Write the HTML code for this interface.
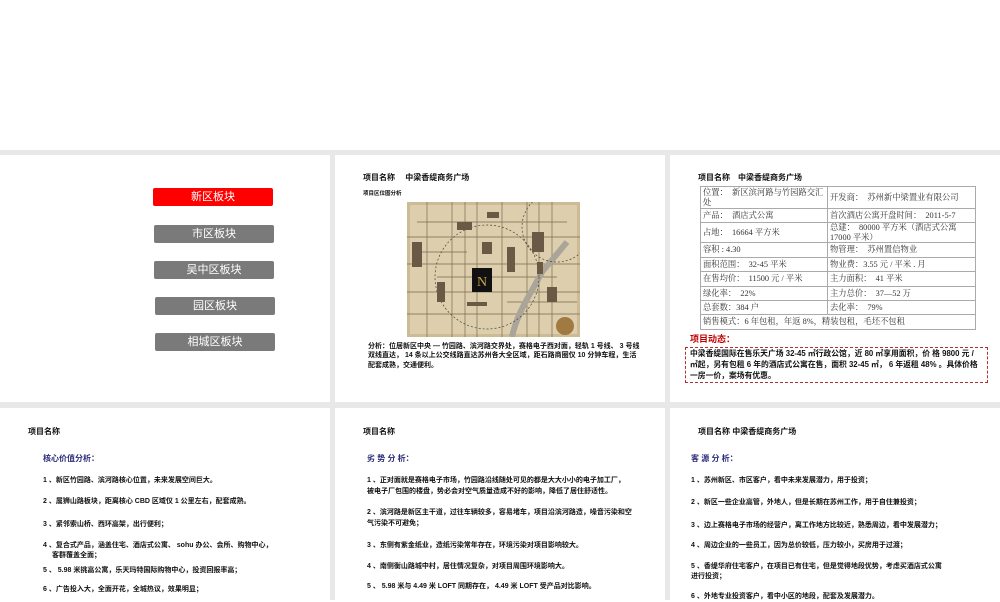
<!DOCTYPE html>
<html><head><meta charset="utf-8"><style>
*{margin:0;padding:0;box-sizing:border-box}
body{width:1000px;height:600px;background:#fff;position:relative;overflow:hidden;font-family:"Liberation Sans","Noto Sans CJK SC",sans-serif;color:#111}
.g{position:absolute;background:#e8e8e8}
.a{position:absolute;white-space:nowrap}
.btn{position:absolute;width:120px;height:18px;border-radius:2px;background:#7a7a7a;color:#fff;font-size:11px;text-align:center;line-height:18px}
.t{font-size:8px;font-weight:bold}
.it{font-size:7px;font-weight:bold;color:#111;line-height:9.5px}
.sub{font-size:8px;font-weight:bold;color:#2a2a7a}
table{position:absolute;left:700px;top:186px;width:276px;border-collapse:collapse;font-family:"Liberation Serif","Noto Serif CJK SC",serif;font-size:8.3px;color:#333;table-layout:fixed}
td{border:1px solid #aaa;padding:0 2px;vertical-align:middle;line-height:9.5px;overflow:hidden}
</style></head><body>
<div class="g" style="left:0;top:150px;width:1000px;height:5px"></div>
<div class="g" style="left:0;top:402px;width:1000px;height:6px"></div>
<div class="g" style="left:330px;top:150px;width:5px;height:450px"></div>
<div class="g" style="left:665px;top:150px;width:5px;height:450px"></div>

<div class="btn" style="left:153px;top:188px;background:#f00">新区板块</div>
<div class="btn" style="left:154px;top:225px">市区板块</div>
<div class="btn" style="left:154px;top:261px">吴中区板块</div>
<div class="btn" style="left:155px;top:297px">园区板块</div>
<div class="btn" style="left:155px;top:333px">相城区板块</div>

<div class="a t" style="left:363px;top:172px">项目名称　 中梁香缇商务广场</div>
<div class="a" style="left:363px;top:189px;font-size:5.5px;font-weight:bold">项目区位图分析</div>
<svg style="position:absolute;left:407px;top:202px" width="173" height="135" viewBox="0 0 173 135">
<rect width="173" height="135" fill="#cdbb95"/>
<rect x="3" y="3" width="167" height="129" fill="#ddcfae"/>
<g stroke="#7a6a50" stroke-width="0.7" fill="none">
<path d="M0 35H173M0 62H173M0 90H173M0 112H173M20 0V135M45 0V135M70 0V135M95 0V135M120 0V135M145 0V135M10 20H160M30 75H150M8 50H60M100 100H170M58 0V135M132 0V135"/>
<path d="M105 135C110 110 125 90 135 70L160 40" stroke-width="6" stroke="#aaa598"/>
<circle cx="80" cy="75" r="52" stroke-dasharray="2 2" stroke="#443"/>
<circle cx="150" cy="25" r="35" stroke-dasharray="2 2" stroke="#443"/>
</g>
<g fill="#6a5a45"><rect x="50" y="20" width="15" height="8"/><rect x="75" y="40" width="10" height="12"/><rect x="125" y="30" width="12" height="20"/><rect x="100" y="45" width="8" height="25"/><rect x="30" y="80" width="8" height="20"/><rect x="140" y="85" width="10" height="15"/><rect x="5" y="40" width="10" height="25"/><rect x="80" y="10" width="12" height="6"/><rect x="130" y="60" width="6" height="12"/><rect x="60" y="100" width="20" height="4"/></g>
<rect x="65" y="66" width="20" height="24" fill="#111"/>
<text x="75" y="84" font-size="14" fill="#c9a64a" text-anchor="middle" font-family="Liberation Serif">N</text>
<circle cx="158" cy="124" r="9" fill="#a07a40"/>
</svg>
<div class="a" style="left:368px;top:342px;font-size:7px;font-weight:bold;line-height:9.3px;white-space:normal;width:272px">分析：位居新区中央 — 竹园路、滨河路交界处，赛格电子西对面，轻轨 1 号线、 3 号线双线直达， 14 条以上公交线路直达苏州各大全区域，距石路商圈仅 10 分钟车程，生活配套成熟，交通便利。</div>

<div class="a t" style="left:698px;top:172px">项目名称　中梁香缇商务广场</div>
<table>
<colgroup><col style="width:127px"><col></colgroup>
<tr style="height:22px"><td>位置：　新区滨河路与竹园路交汇处</td><td>开发商：　苏州新中梁置业有限公司</td></tr>
<tr style="height:14px"><td>产品：　酒店式公寓</td><td>首次酒店公寓开盘时间：　2011-5-7</td></tr>
<tr style="height:20px"><td>占地：　16664 平方米</td><td>总建：　80000 平方米（酒店式公寓 17000 平米）</td></tr>
<tr style="height:15px"><td>容积 : 4.30</td><td>物管理：　苏州置信物业</td></tr>
<tr style="height:14px"><td>面积范围：　32-45 平米</td><td>物业费：3.55 元 / 平米 . 月</td></tr>
<tr style="height:15px"><td>在售均价：　11500 元 / 平米</td><td>主力面积：　41 平米</td></tr>
<tr style="height:14px"><td>绿化率：　22%</td><td>主力总价：　37—52 万</td></tr>
<tr style="height:14px"><td>总套数：384 户</td><td>去化率：　79%</td></tr>
<tr style="height:15px"><td colspan="2">销售模式：6 年包租，年返 8%，精装包租，毛坯不包租</td></tr>
</table>
<div class="a" style="left:690px;top:332px;font-size:9px;font-weight:bold;color:#c00000">项目动态：</div>
<div style="position:absolute;left:685px;top:347px;width:303px;height:36px;border:1px dashed #b03030;padding:1px 4px;font-size:7.8px;font-weight:bold;line-height:10.8px;color:#111">中梁香缇国际在售乐天广场 32-45 ㎡行政公馆，近 80 ㎡享用面积，价 格 9800 元 / ㎡起，另有包租 6 年的酒店式公寓在售，面积 32-45 ㎡， 6 年返租 48% 。具体价格一房一价，案场有优惠。</div>

<div class="a t" style="left:28px;top:426px">项目名称</div>
<div class="a sub" style="left:43px;top:453px">核心价值分析：</div>
<div class="a it" style="left:43px;top:476px">1 、新区竹园路、滨河路核心位置，未来发展空间巨大。</div>
<div class="a it" style="left:43px;top:497px">2 、属狮山路板块，距离核心 CBD 区域仅 1 公里左右，配套成熟。</div>
<div class="a it" style="left:43px;top:520px">3 、紧邻索山桥、西环高架，出行便利；</div>
<div class="a it" style="left:43px;top:541px">4 、复合式产品，涵盖住宅、酒店式公寓、 sohu 办公、会所、购物中心，<br>　 客群覆盖全面；</div>
<div class="a it" style="left:43px;top:566px">5 、 5.98 米挑高公寓，乐天玛特国际购物中心，投资回报率高；</div>
<div class="a it" style="left:43px;top:585px">6 、广告投入大，全面开花，全城热议，效果明显；</div>

<div class="a t" style="left:363px;top:426px">项目名称</div>
<div class="a sub" style="left:367px;top:453px">劣 势 分 析：</div>
<div class="a it" style="left:367px;top:476px;line-height:10.5px">1 、正对面就是赛格电子市场，竹园路沿线随处可见的都是大大小小的电子加工厂，<br>被电子厂包围的楼盘，势必会对空气质量造成不好的影响，降低了居住舒适性。</div>
<div class="a it" style="left:367px;top:508px;line-height:10.5px">2 、滨河路是新区主干道，过往车辆较多，容易堵车，项目沿滨河路造，噪音污染和空<br>气污染不可避免；</div>
<div class="a it" style="left:367px;top:541px">3 、东侧有紫金纸业，造纸污染常年存在，环境污染对项目影响较大。</div>
<div class="a it" style="left:367px;top:562px">4 、南侧衡山路城中村，居住情况复杂，对项目周围环境影响大。</div>
<div class="a it" style="left:367px;top:582px">5 、 5.98 米与 4.49 米 LOFT 同期存在， 4.49 米 LOFT 受产品对比影响。</div>

<div class="a t" style="left:698px;top:426px">项目名称 中梁香缇商务广场</div>
<div class="a sub" style="left:691px;top:453px">客 源 分 析：</div>
<div class="a it" style="left:691px;top:476px">1 、苏州新区、市区客户，看中未来发展潜力，用于投资；</div>
<div class="a it" style="left:691px;top:498px">2 、新区一些企业高管，外地人，但是长期在苏州工作，用于自住兼投资；</div>
<div class="a it" style="left:691px;top:521px">3 、边上赛格电子市场的经营户，离工作地方比较近，熟悉周边，看中发展潜力；</div>
<div class="a it" style="left:691px;top:541px">4 、周边企业的一些员工，因为总价较低，压力较小，买房用于过渡；</div>
<div class="a it" style="left:691px;top:562px">5 、香缇华府住宅客户，在项目已有住宅，但是觉得地段优势，考虑买酒店式公寓<br>进行投资；</div>
<div class="a it" style="left:691px;top:592px">6 、外地专业投资客户，看中小区的地段，配套及发展潜力。</div>
</body></html>
